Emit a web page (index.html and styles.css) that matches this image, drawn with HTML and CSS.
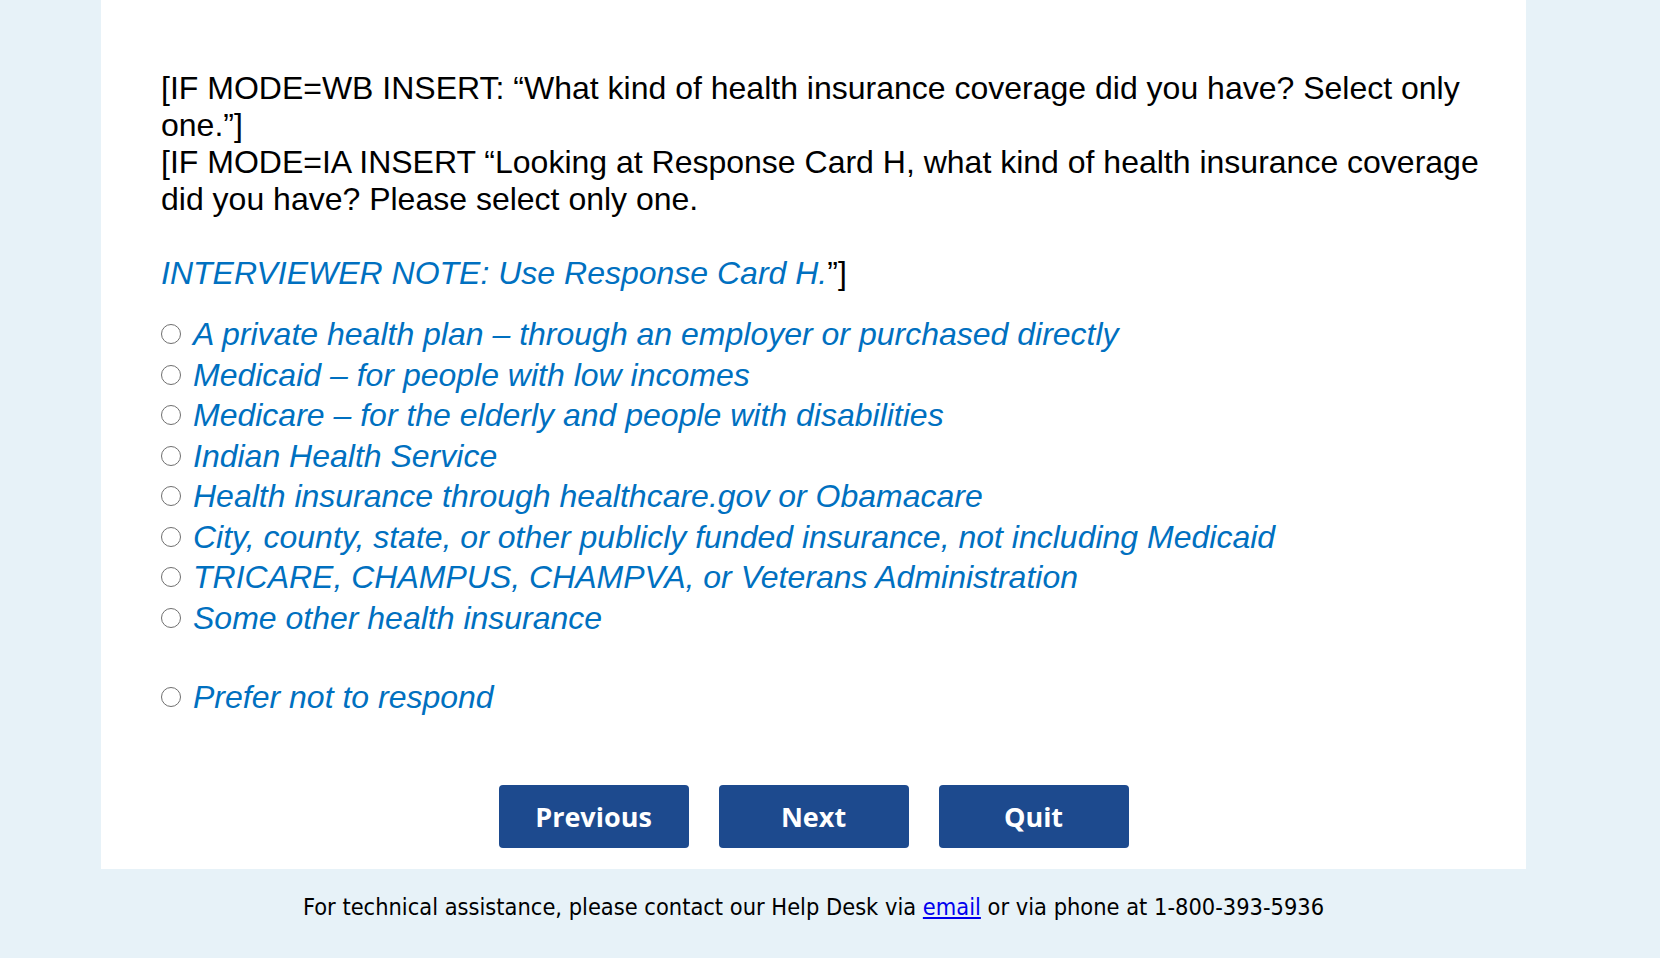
FILE: index.html
```html
<!DOCTYPE html>
<html lang="en">
<head>
  <meta charset="UTF-8" />
  <meta name="viewport" content="width=device-width, initial-scale=1.0"/>
  <title>Health Insurance Coverage</title>
  <link rel="stylesheet" href="styles.css">
</head>
<body>

  <div class="panel">
    <p class="question">[IF MODE=WB INSERT: “What kind of health insurance coverage did you have? Select only one.”]<br>[IF MODE=IA INSERT “Looking at Response Card H, what kind of health insurance coverage did you have? Please select only one.</p>

    <p class="note"><span class="note-text">INTERVIEWER NOTE: Use Response Card H.</span>”]</p>

    <form class="options">
      <label class="option"><input type="radio" name="coverage" value="1"> A private health plan – through an employer or purchased directly</label>
      <label class="option"><input type="radio" name="coverage" value="2"> Medicaid – for people with low incomes</label>
      <label class="option"><input type="radio" name="coverage" value="3"> Medicare – for the elderly and people with disabilities</label>
      <label class="option"><input type="radio" name="coverage" value="4"> Indian Health Service</label>
      <label class="option"><input type="radio" name="coverage" value="5"> Health insurance through healthcare.gov or Obamacare</label>
      <label class="option"><input type="radio" name="coverage" value="6"> City, county, state, or other publicly funded insurance, not including Medicaid</label>
      <label class="option"><input type="radio" name="coverage" value="7"> TRICARE, CHAMPUS, CHAMPVA, or Veterans Administration</label>
      <label class="option"><input type="radio" name="coverage" value="8"> Some other health insurance</label>
      <!-- separate from the list above -->
      <label class="option refuse"><input type="radio" name="coverage" value="99"> Prefer not to respond</label>
    </form>

    <div class="nav">
      <button type="button" class="nav-btn">Previous</button>
      <button type="button" class="nav-btn">Next</button>
      <button type="button" class="nav-btn">Quit</button>
    </div>
  </div>

  <p class="footer">For technical assistance, please contact our Help Desk via <a href="#">email</a> or via phone at 1-800-393-5936</p>

</body>
</html>
```

FILE: styles.css
```css
body {
  margin: 0;
  background-color: #e7f2f8;
  font-family: 'Liberation Sans', Arial, sans-serif;
}
.panel {
  background: white;
  width: 1425px;
  margin-left: 101px;
  box-sizing: border-box;
  padding: 70px 60px 21px;
}
.question {
  margin: 0 -20px 0 0;
  font-size: 32px;
  line-height: 37px;
  color: #000;
}
.note {
  margin: 37px 0 0;
  font-size: 32px;
  line-height: 37px;
  color: #000;
}
.note-text {
  color: #0070c0;
  font-style: italic;
}
.options {
  display: flex;
  flex-direction: column;
  margin-top: 22px;
}
.option {
  display: flex;
  align-items: center;
  gap: 12px;
  font-size: 32px;
  line-height: 40.5px;
  font-style: italic;
  color: #0070c0;
}
.option input {
  appearance: none;
  width: 20px;
  height: 20px;
  margin: 0;
  border: 1.5px solid #6f6f6f;
  border-radius: 50%;
  background: white;
  flex-shrink: 0;
}
.option input:checked {
  background: radial-gradient(#0070c0 0 45%, white 50%);
}
.refuse {
  margin-top: 38.5px;
}
.nav {
  display: flex;
  justify-content: center;
  gap: 30px;
  margin-top: 68px;
}
.nav-btn {
  width: 190px;
  height: 63px;
  border: none;
  border-radius: 4px;
  background-color: #1d4a8e;
  color: white;
  font-family: 'Open Sans', sans-serif;
  font-weight: bold;
  font-size: 27px;
  cursor: pointer;
}
.nav-btn:hover {
  background-color: #163a70;
}
.footer {
  margin: 0;
  padding-top: 23px;
  width: 1425px;
  margin-left: 101px;
  text-align: center;
  font-family: 'DejaVu Sans Condensed', sans-serif;
  font-size: 23.4px;
  line-height: 30px;
  color: #000;
}
.footer a {
  color: #0000ee;
}
```
